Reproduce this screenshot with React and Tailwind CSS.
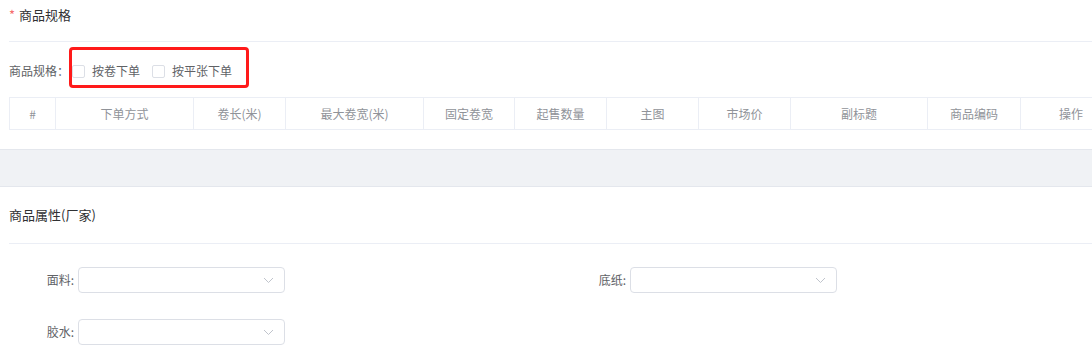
import React from 'react';

const font = { fontFamily: '"Noto Sans CJK SC", "Microsoft YaHei", sans-serif' };

const columns = [
    { label: '#', w: 'w-[46px]' },
    { label: '下单方式', w: 'w-[138px]' },
    { label: '卷长(米)', w: 'w-[92px]' },
    { label: '最大卷宽(米)', w: 'w-[138px]' },
    { label: '固定卷宽', w: 'w-[91px]' },
    { label: '起售数量', w: 'w-[92px]' },
    { label: '主图', w: 'w-[92px]' },
    { label: '市场价', w: 'w-[92px]' },
    { label: '副标题', w: 'w-[137px]' },
    { label: '商品编码', w: 'w-[93px]' },
    { label: '操作', w: 'w-[100px]' },
];

const Checkbox = ({ label }) => (
    <label className="flex items-center gap-[7px] cursor-pointer">
        <span className="w-[13px] h-[13px] border border-[#dcdfe6] rounded-[2px] bg-white"></span>
        <span className="text-[12px] text-[#606266]">{label}</span>
    </label>
);

const SelectBox = () => (
    <div className="w-[207px] h-[26px] border border-[#dcdfe6] rounded-[4px] bg-white flex items-center justify-end pr-[10px]">
        <svg width="11" height="7" viewBox="0 0 11 7" fill="none">
            <path d="M1 1l4.5 4.5L10 1" stroke="#c0c4cc" strokeWidth="1" />
        </svg>
    </div>
);

const Field = ({ label }) => (
    <div className="flex items-center">
        <span className="w-[78px] pr-[4px] text-right text-[12px] text-[#606266]">{label}</span>
        <SelectBox />
    </div>
);

const App = () => {
    return (
        <div className="w-[1092px] h-[349px] bg-white overflow-hidden relative" style={font}>
            {/* 商品规格 */}
            <section className="pl-[9px]">
                <div className="h-[42px] pt-[5px] border-b border-[#ebeef5]">
                    <h3 className="leading-[20px] text-[13px] text-[#303133]">
                        <span className="text-[#f56c6c] mr-[4px]">*</span>商品规格
                    </h3>
                </div>

                <div className="pt-[10px] h-[48px] flex items-center">
                    <span className="text-[12px] text-[#606266] w-[63px]">商品规格：</span>
                    <div className="flex items-center gap-[12px]">
                        <Checkbox label="按卷下单" />
                        <Checkbox label="按平张下单" />
                    </div>
                </div>

                <div className="mt-[7px] overflow-hidden">
                    <div className="flex w-max border border-[#ebeef5] h-[33px]">
                        {columns.map((col, i) => (
                            <div
                                key={i}
                                className={`${col.w} shrink-0 flex items-center justify-center text-[12px] text-[#909399] ${i < columns.length - 1 ? 'border-r border-[#ebeef5]' : ''}`}
                            >
                                {col.label}
                            </div>
                        ))}
                    </div>
                </div>
                <div className="h-[19px]"></div>
            </section>

            {/* divider band */}
            <div className="h-[38px] bg-[#f0f2f5] border-y border-[#e4e7ed]"></div>

            {/* 商品属性 */}
            <section className="pl-[9px]">
                <div className="h-[57px] flex items-center border-b border-[#ebeef5]">
                    <h3 className="text-[13px] text-[#303133]">商品属性(厂家)</h3>
                </div>
            </section>

            <div className="pt-[23px] flex flex-col gap-[26px]">
                <div className="flex">
                    <div className="w-[552px]">
                        <Field label="面料:" />
                    </div>
                    <Field label="底纸:" />
                </div>
                <div className="flex">
                    <Field label="胶水:" />
                </div>
            </div>

            {/* annotation */}
            <div className="absolute left-[69px] top-[47px] w-[180px] h-[41px] border-[3px] border-[#ff1a1a] rounded-[4px] pointer-events-none"></div>
        </div>
    );
};

export default App;
